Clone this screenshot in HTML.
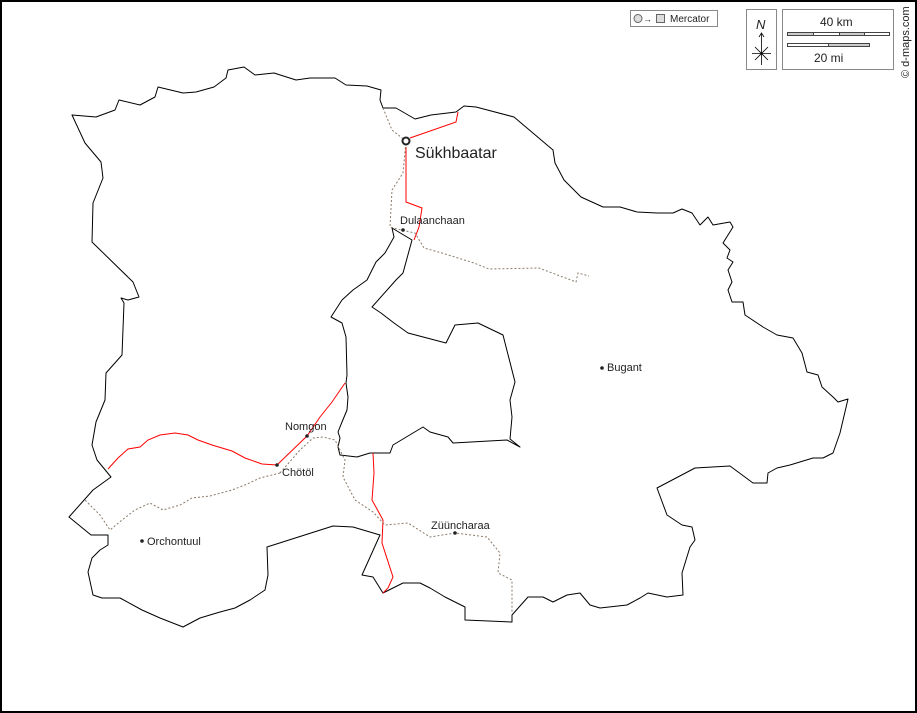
<!DOCTYPE html>
<html><head><meta charset="utf-8"><style>
html,body{margin:0;padding:0;background:#fff}
svg{display:block}
text{font-family:"Liberation Sans",Arial,sans-serif;fill:#222}
</style></head><body>
<svg width="917" height="713" viewBox="0 0 917 713" xmlns="http://www.w3.org/2000/svg">
<rect x="1" y="1" width="915" height="711" fill="#fff" stroke="#000" stroke-width="2"/>
<g fill="none" stroke="#000" stroke-width="1" stroke-linejoin="round">
<!-- outer boundary -->
<path d="M72,115 L96,117 L115,110 L119,100 L140,105 L155,97 L158,87 L183,93 L196,92 L214,87 L226,78 L228,70 L244,67 L255,75 L274,73 L296,80 L310,78 L335,78 L346,85 L367,86 L381,90 L380,100 L383,108 L396,108 L415,119 L431,115 L456,112 L464,106 L476,107 L514,117 L553,150 L555,163 L564,180 L581,197 L603,207 L620,207 L637,212 L657,213 L673,213 L682,209 L692,213 L700,225 L708,217 L713,225 L730,222 L733,227 L723,243 L730,250 L727,258 L733,262 L728,270 L732,282 L728,290 L732,302 L743,302 L745,315 L763,327 L777,335 L793,338 L802,353 L807,372 L818,375 L822,387 L833,397 L838,402 L848,399 L840,433 L833,453 L823,458 L813,458 L790,465 L777,468 L768,473 L767,483 L753,483 L730,466 L695,468 L657,488 L667,515 L682,525 L692,527 L695,540 L690,547 L682,573 L683,595 L667,597 L648,593 L640,598 L627,605 L600,608 L590,605 L580,593 L567,595 L553,602 L543,597 L528,597 L512,615 L512,622 L465,620 L465,607 L445,597 L430,588 L420,583 L403,583 L383,593 L373,577 L362,575 L380,535 L353,527 L333,526 L267,547 L268,575 L265,590 L250,600 L235,608 L220,612 L200,618 L183,627 L160,618 L142,610 L120,598 L102,598 L93,595 L88,572 L92,558 L100,550 L108,545 L108,535 L91,535 L69,517 L93,490 L111,477 L97,460 L92,445 L96,422 L105,400 L106,373 L122,355 L124,303 L121,298 L128,300 L139,297 L133,282 L92,242 L93,203 L103,178 L101,162 L85,143 Z"/>
<!-- west-central boundary -->
<path d="M392,228 L394,237 L385,253 L376,262 L367,280 L353,290 L342,300 L331,317 L342,323 L346,337 L347,375 L346,383 L348,397 L347,410 L342,422 L338,432 L340,438 L338,447 L340,455 L357,457 L370,453 L380,453 L390,453 L393,445 L423,427 L430,432 L448,437 L453,443 L507,440 L520,447 L510,439 L512,417 L510,400 L515,382 L503,335 L478,323 L455,325 L446,343 L408,333 L394,323 L381,313 L372,307 L396,280 L403,273 L412,240 L392,228"/>
<path d="M91,535 L108,535"/>
</g>
<!-- red roads -->
<g fill="none" stroke="#f00" stroke-width="1">
<path d="M458,112 L456,122 L410,138"/>
<path d="M406,147 L406,202 L422,208 L419,227 L414,240"/>
<path d="M345,383 L332,402 L320,417 L307,436 L277,465 L262,464 L245,458 L232,451 L212,445 L198,440 L188,435 L175,433 L160,435 L148,440 L140,447 L128,449 L118,458 L108,469"/>
<path d="M373,453 L374,473 L372,500 L383,520 L382,543 L393,577 L388,588 L383,593"/>
</g>
<!-- dotted tracks -->
<g fill="none" stroke="#8a7a6a" stroke-width="1" stroke-dasharray="2,2">
<path d="M383,108 L392,130 L406,141 L403,173 L392,190 L390,227 L401,230 L415,233 L424,248 L442,253 L474,263 L489,269 L539,268 L576,282 L578,273 L589,276"/>
<path d="M280,473 L300,450 L313,438 L323,437 L335,440 L345,460 L343,477 L355,500 L373,512 L385,525 L408,523 L430,537 L455,533 L487,537 L500,553 L498,573 L512,580 L512,613"/>
<path d="M280,473 L260,478 L245,485 L232,490 L210,496 L192,498 L180,505 L163,510 L150,503 L135,510 L122,520 L110,530 L100,515 L85,500"/>
</g>
<!-- towns -->
<circle cx="406" cy="141" r="3.5" fill="#fff" stroke="#222" stroke-width="2"/>
<text x="415" y="158" font-size="16">Sükhbaatar</text>
<circle cx="403" cy="230" r="1.8" fill="#222"/>
<text x="400" y="224" font-size="11">Dulaanchaan</text>
<circle cx="602" cy="368" r="1.8" fill="#222"/>
<text x="607" y="371" font-size="11">Bugant</text>
<circle cx="307" cy="436" r="1.8" fill="#222"/>
<text x="285" y="430" font-size="11">Nomgon</text>
<circle cx="277" cy="465" r="1.8" fill="#222"/>
<text x="282" y="476" font-size="11">Chötöl</text>
<circle cx="142" cy="541" r="1.8" fill="#222"/>
<text x="147" y="545" font-size="11">Orchontuul</text>
<circle cx="455" cy="533" r="1.8" fill="#222"/>
<text x="431" y="529" font-size="11">Züüncharaa</text>
<!-- legend -->
<rect x="630.5" y="10.5" width="87" height="16" fill="#fff" stroke="#888"/>
<circle cx="638" cy="18.5" r="4" fill="#ddd" stroke="#666"/>
<text x="643" y="22" font-size="9">→</text>
<rect x="656.5" y="14.5" width="8" height="8" fill="#ddd" stroke="#666"/>
<text x="670" y="22" font-size="10">Mercator</text>
<rect x="746.5" y="9.5" width="30" height="60" fill="#fff" stroke="#888"/>
<text x="756" y="29" font-size="13" font-style="italic" font-family="Liberation Serif">N</text>
<path d="M761.5,33 L761.5,65 M752,53.5 L771,53.5 M755,47 L768,60 M768,47 L755,60" stroke="#000" stroke-width="0.8" fill="none"/>
<path d="M759,37 L761.5,33 L764,37" stroke="#000" fill="none" stroke-width="0.8"/>
<rect x="782.5" y="9.5" width="111" height="60" fill="#fff" stroke="#888"/>
<text x="820" y="26" font-size="12" font-family="Liberation Serif">40 km</text>
<rect x="787.5" y="32.5" width="102" height="3" fill="#fff" stroke="#444"/>
<rect x="787.5" y="32.5" width="26" height="3" fill="#ccc" stroke="#444"/>
<rect x="839.5" y="32.5" width="25" height="3" fill="#ccc" stroke="#444"/>
<rect x="787.5" y="43.5" width="82" height="3" fill="#fff" stroke="#444"/>
<rect x="828.5" y="43.5" width="41" height="3" fill="#ccc" stroke="#444"/>
<text x="814" y="62" font-size="12" font-family="Liberation Serif">20 mi</text>
<text transform="translate(909,78) rotate(-90)" font-size="11">© d-maps.com</text>
</svg>
</body></html>
